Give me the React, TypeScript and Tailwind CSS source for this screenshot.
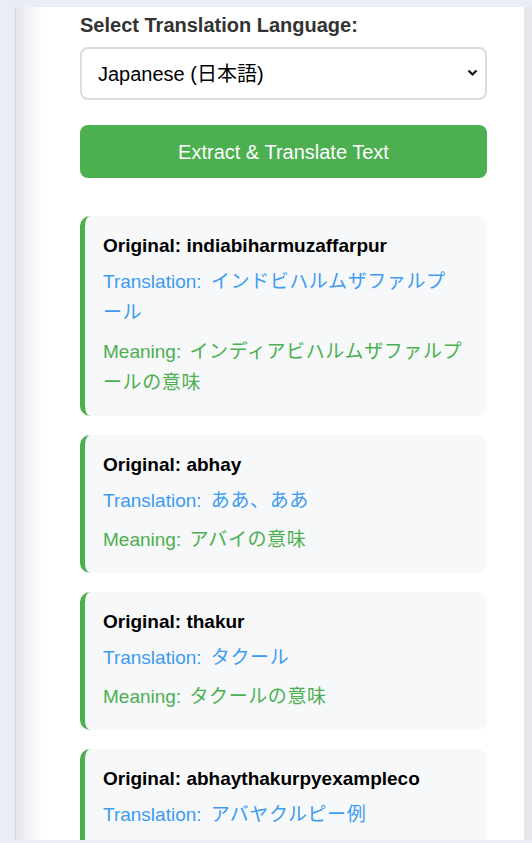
import { useState } from 'react'

type Result = {
  original: string
  translation: string
  meaning: string
}

// line breaks follow the wrap of the original rendering
const results: Result[] = [
  {
    original: 'indiabiharmuzaffarpur',
    translation: 'インドビハルムザファルプ\nール',
    meaning: 'インディアビハルムザファルプ\nールの意味',
  },
  { original: 'abhay', translation: 'ああ、ああ', meaning: 'アバイの意味' },
  { original: 'thakur', translation: 'タクール', meaning: 'タクールの意味' },
  {
    original: 'abhaythakurpyexampleco',
    translation: 'アバヤクルピー例',
    meaning: 'アバヤタクルピーの例の意味',
  },
]

const font = { fontFamily: '"Liberation Sans", Arial, "Noto Sans CJK JP", sans-serif' }

function ResultCard({ item }: { item: Result }) {
  return (
    <div className="mb-[19px] rounded-[10px] border-l-[5px] border-[#4caf50] bg-[#f7f8fa] pl-[18px] pr-[12px] pt-[15px] pb-[18px] text-[19px]">
      <p className="mb-[5px] font-bold leading-[30px] text-black">Original: {item.original}</p>
      <p className="mb-[8px] whitespace-pre-line leading-[31px] text-[#3d9bf0]">
        Translation: <span className="ml-[4px] tracking-[0.6px]">{item.translation}</span>
      </p>
      <p className="whitespace-pre-line leading-[31px] text-[#4caf50]">
        Meaning: <span className="ml-[3px] tracking-[0.6px]">{item.meaning}</span>
      </p>
    </div>
  )
}

export default function App() {
  const [lang, setLang] = useState('ja')

  return (
    <div className="h-[843px] overflow-hidden bg-[#e9eef6] pt-[7px] pb-[3px]" style={font}>
      <div className="ml-[15px] flex h-[833px] overflow-hidden border-l border-[#d3d8df] bg-white">
        {/* left shade */}
        <div className="w-[26px] shrink-0 bg-gradient-to-r from-[#e6e7ea] to-white" />

        {/* main column */}
        <div className="ml-[38px] w-[407px] shrink-0">
          <label className="block pt-[6px] text-[20px] font-bold leading-[24px] text-[#333]">
            Select Translation Language:
          </label>

          <div className="relative mt-[10px]">
            <select
              value={lang}
              onChange={(e) => setLang(e.target.value)}
              className="h-[53px] w-full appearance-none rounded-[8px] border-2 border-[#dcdcdc] bg-white pl-[16px] text-[20px] text-black outline-none"
              style={font}
            >
              <option value="ja">Japanese (日本語)</option>
              <option value="hi">Hindi (हिन्दी)</option>
              <option value="es">Spanish (Español)</option>
            </select>
            <svg
              className="pointer-events-none absolute right-[9px] top-[22px]"
              width="11"
              height="8"
              viewBox="0 0 11 8"
            >
              <path d="M1.5 1.5 L5.5 5.5 L9.5 1.5" fill="none" stroke="#111" strokeWidth="2.2" />
            </svg>
          </div>

          <button className="mt-[25px] h-[53px] w-full rounded-[8px] bg-[#4caf50] text-[20px] text-white">
            Extract &amp; Translate Text
          </button>

          <div className="mt-[38px]">
            {results.map((r) => (
              <ResultCard key={r.original} item={r} />
            ))}
          </div>
        </div>

        <div className="flex-1" />
        {/* right strip */}
        <div className="w-[8px] shrink-0 bg-[#e6e8ec]" />
      </div>
    </div>
  )
}
